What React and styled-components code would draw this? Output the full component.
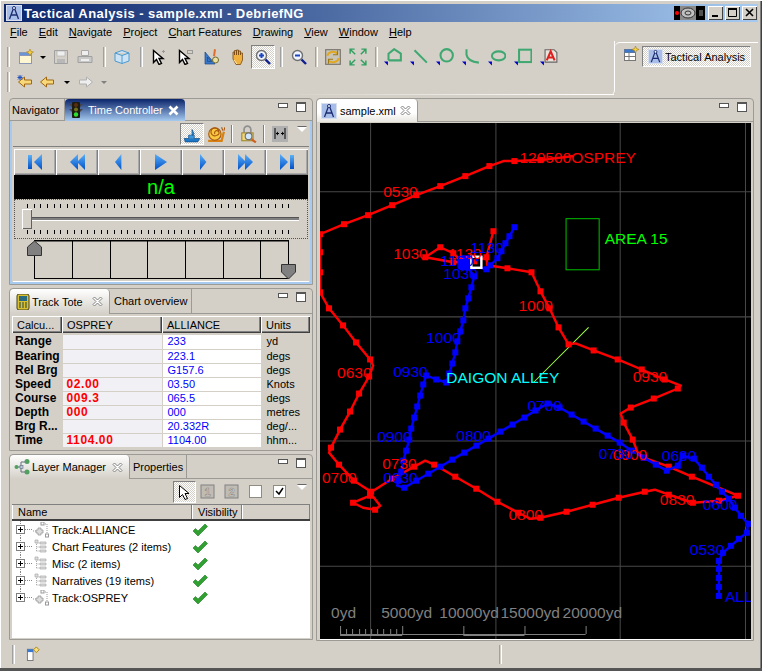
import styled, { createGlobalStyle, css } from 'styled-components'

const GlobalStyle = createGlobalStyle`
  html, body { margin: 0; padding: 0; background: #d4d0c8; }
  body { font-family: "Liberation Sans", Arial, sans-serif; font-size: 11px; color: #000; }
  svg { flex: none; }
`

const checker = css`
  background: repeating-conic-gradient(#ffffff 0 25%, #d4d0c8 0 50%) 0 0 / 2px 2px;
`

const Window = styled.div`
  width: 762px;
  height: 671px;
  box-sizing: border-box;
  padding: 4px 4px 0;
  display: flex;
  flex-direction: column;
  background: #d4d0c8;
  box-shadow: inset 1px 1px 0 #ffffff, inset -1px -1px 0 #404040, inset -2px -2px 0 #808080;
  overflow: hidden;
`
const TitleBar = styled.div`
  height: 18px;
  flex: none;
  display: flex;
  align-items: center;
  gap: 2px;
  padding-left: 2px;
  color: #fff;
  font-weight: bold;
  font-size: 13px;
  letter-spacing: 0.42px;
  background: linear-gradient(to right, #0a246a, #a6caf0);
`
const TitleSpacer = styled.div`
  flex: 1;
`
const TrayIcon = styled.svg`
  margin-right: 1px;
`
const CaptionButton = styled.div`
  width: 15px;
  height: 14px;
  margin-right: ${p => (p.$last ? '1px' : '0')};
  background: #d4d0c8;
  box-shadow: inset 1px 1px 0 #fff, inset -1px -1px 0 #404040;
  display: flex;
  align-items: center;
  justify-content: center;
`
const MenuBar = styled.div`
  height: 19px;
  flex: none;
  display: flex;
  align-items: center;
  padding-left: 1px;
  gap: 1px;
`
const MenuItem = styled.span`
  padding: 0 5px;
  white-space: nowrap;
  u { text-decoration: underline; }
`
const ToolArea = styled.div`
  height: 54px;
  flex: none;
  display: flex;
`
const Toolbars = styled.div`
  flex: 1;
  display: flex;
  flex-direction: column;
  padding-top: 3px;
  border-bottom-right-radius: 5px;
  border-right: 1px solid #fff;
  position: relative;
  &::after {
    content: '';
    position: absolute;
    left: 0;
    right: 0;
    bottom: 0;
    height: 1px;
    background: linear-gradient(to right, #d4d0c8 45%, #ffffff 100%);
  }
`
const ToolRow = styled.div`
  height: ${p => p.$h}px;
  display: flex;
  align-items: center;
  padding-left: 3px;
`
const Grip = styled.div`
  width: 1px;
  height: ${p => p.$h || 20}px;
  flex: none;
  margin: 0 ${p => p.$r ?? 4}px 0 ${p => p.$l ?? 0}px;
  background: #d4d0c8;
  border-left: 1px solid #a0a0a0;
  border-right: 1px solid #fff;
`
const ToolButton = styled.div`
  width: ${p => p.$w || 26}px;
  height: 24px;
  flex: none;
  display: flex;
  align-items: center;
  justify-content: center;
  box-sizing: border-box;
  ${p => p.$on && css`
    ${checker}
    border: 1px solid;
    border-color: #808080 #fff #fff #808080;
  `}
`
const Caret = styled.span`
  width: 0;
  height: 0;
  flex: none;
  margin: ${p => p.$m};
  border-left: 3px solid transparent;
  border-right: 3px solid transparent;
  border-top: 3px solid ${p => p.$dim ? '#808080' : '#000'};
`
const PerspectiveBar = styled.div`
  width: 143px;
  flex: none;
  box-sizing: border-box;
  border-top: 1px solid #fff;
  border-top-left-radius: 5px;
  margin-top: 1px;
  padding: 3px 0 0 8px;
  display: flex;
  align-items: flex-start;
  gap: 3px;
  height: 53px;
`
const PerspectiveButton = styled.div`
  width: 109px;
  height: 21px;
  box-sizing: border-box;
  border: 1px solid;
  border-color: #808080 #fff #fff #808080;
  ${checker}
  display: flex;
  align-items: center;
  gap: 2px;
  padding-left: 5px;
  white-space: nowrap;
`
const Main = styled.div`
  flex: 1;
  min-height: 0;
  display: flex;
  gap: 3px;
  padding: 3px 0 0 5px;
`
const LeftColumn = styled.div`
  width: 304px;
  flex: none;
  display: flex;
  flex-direction: column;
  gap: 3px;
`
const Panel = styled.div`
  height: ${p => p.$h ? p.$h + 'px' : 'auto'};
  flex: ${p => p.$h ? 'none' : 1};
  box-sizing: border-box;
  border: 1px solid #9c9a94;
  border-radius: 4px 4px 0 0;
  display: flex;
  flex-direction: column;
  overflow: hidden;
`
const TabBar = styled.div`
  height: ${p => p.$h || 22}px;
  flex: none;
  display: flex;
  align-items: stretch;
  border-bottom: 1px solid #9c9a94;
`
const Tab = styled.div`
  display: flex;
  align-items: center;
  gap: ${p => p.$gap ?? 5}px;
  box-sizing: border-box;
  width: ${p => p.$w}px;
  padding: 0 6px 0 ${p => p.$pl || 4}px;
  white-space: nowrap;
  border-right: 1px solid #9c9a94;
  ${p => p.$selected && css`
    background: linear-gradient(to bottom, #ffffff, #d4d0c8);
    border-radius: 4px 4px 0 0;
    margin-bottom: -1px;
  `}
  ${p => p.$active && css`
    background: linear-gradient(to bottom, #0a246a, #a6caf0);
    color: #fff;
    border-radius: 4px 4px 0 0;
    border-right: none;
    margin-bottom: -1px;
  `}
  ${p => p.$sheet && css`
    background: linear-gradient(to bottom, #ffffff 60%, #e8e6e0);
    border-radius: 4px 4px 0 0;
    margin-bottom: -1px;
  `}
`
const TabClose = styled.svg`
  margin-left: auto;
  flex: none;
`
const TabActions = styled.div`
  margin-left: auto;
  display: flex;
  align-items: flex-start;
  gap: 8px;
  padding: 3px 6px 0 0;
`
const MinBox = styled.span`
  width: 8px;
  height: 3px;
  margin-top: 1px;
  border: 1px solid #555;
  background: #fff;
`
const MaxBox = styled.span`
  width: 8px;
  height: 7px;
  border: 1px solid #555;
  border-top-width: 2px;
  background: #fff;
`
const ActiveFrame = styled.div`
  flex: 1;
  min-height: 0;
  border: 2px solid #a6caf0;
  border-top: none;
  display: flex;
  flex-direction: column;
`
const ViewToolbar = styled.div`
  height: ${p => p.$h || 25}px;
  flex: none;
  display: flex;
  align-items: center;
  justify-content: flex-end;
  padding-right: 3px;
`
const ViewButton = styled.div`
  width: ${p => p.$w || 24}px;
  height: ${p => p.$tall || 22}px;
  flex: none;
  box-sizing: border-box;
  display: flex;
  align-items: center;
  justify-content: center;
  ${p => p.$on && css`
    ${checker}
    border: 1px solid;
    border-color: #808080 #fff #fff #808080;
  `}
`
const ViewMenu = styled.span`
  width: 0;
  height: 0;
  margin: -8px ${p => p.$r}px 0 ${p => p.$l}px;
  border-left: 5px solid transparent;
  border-right: 5px solid transparent;
  border-top: 5px solid #fff;
  filter: drop-shadow(0 -1px 0 #666);
`
const ViewSep = styled.span`
  width: 1px;
  height: 18px;
  margin: 0 ${p => p.$r}px 0 ${p => p.$l}px;
  background: #808080;
  border-right: 1px solid #fff;
`
const TimeBody = styled.div`
  flex: 1;
  min-height: 0;
  margin: 0 1px;
  display: flex;
  flex-direction: column;
  border-top: 1px solid #808080;
  border-bottom: 1px solid #fff;
  padding: 2px 0 0 1px;
`
const TransportRow = styled.div`
  height: 26px;
  flex: none;
  display: grid;
  grid-template-columns: repeat(7, 42px);
`
const TransportButton = styled.div`
  display: flex;
  align-items: center;
  justify-content: center;
  background: #d4d0c8;
  box-shadow: inset 1px 1px 0 #fff, inset -1px -1px 0 #808080, inset -2px -2px 0 #a8a8a8;
`
const TimeDisplay = styled.div`
  height: 24px;
  flex: none;
  margin-right: 1px;
  background: #000;
  color: #00ff00;
  font-size: 20px;
  line-height: 24px;
  text-align: center;
`
const SliderBox = styled.div`
  height: 40px;
  flex: none;
  margin-right: 1px;
  box-sizing: border-box;
  border: 1px dotted #555;
  position: relative;
`
const Ticks = styled.div`
  height: 4px;
  margin: ${p => p.$m};
  width: 268px;
  background: repeating-linear-gradient(to right, #000 0 1px, transparent 1px 6.7px);
`
const SliderTrack = styled.div`
  height: 2px;
  margin: 9px 8px 9px 17px;
  background: #808080;
  border-top: 1px solid #555;
  border-bottom: 1px solid #fff;
`
const SliderThumb = styled.div`
  position: absolute;
  left: 7px;
  top: 9px;
  width: 10px;
  height: 20px;
  background: #d4d0c8;
  box-shadow: inset 1px 1px 0 #fff, inset -1px -1px 0 #606060;
`
const RangeChart = styled.svg`
  display: block;
  flex: none;
  margin-top: 1px;
`
const ToteTable = styled.table`
  margin: 2px 0 0 2px;
  width: 298px;
  border-collapse: collapse;
  table-layout: fixed;
`
const ToteHead = styled.th`
  height: 17px;
  padding: 0 0 0 5px;
  box-sizing: border-box;
  text-align: left;
  font-weight: normal;
  overflow: hidden;
  white-space: nowrap;
  box-shadow: inset 1px 1px 0 #fff, inset -1px -1px 0 #404040, inset -2px -2px 0 #808080;
`
const ToteCell = styled.td`
  height: 14px;
  padding: 0 0 0 ${p => p.$pl ?? 5}px;
  box-sizing: border-box;
  line-height: 13px;
  white-space: nowrap;
  overflow: hidden;
  border-bottom: 1px solid #d4d0c8;
  border-right: 1px solid #d4d0c8;
  background: ${p => p.$bg || 'transparent'};
  color: ${p => p.$color || '#000'};
  ${p => p.$bold && css`
    font-weight: bold;
    font-size: 12px;
    letter-spacing: ${p.$track || 0}px;
  `}
`
const SpacerRow = styled.tr`
  height: 2px;
`
const TreeHeader = styled.div`
  height: 14px;
  flex: none;
  margin: 0 2px;
  display: grid;
  grid-template-columns: 180px 50px 1fr;
  border-top: 1px solid #808080;
  border-bottom: 2px solid #404040;
`
const TreeHeadCell = styled.div`
  padding-left: 5px;
  line-height: 14px;
  border-left: 1px solid #fff;
  border-right: 1px solid #808080;
`
const TreeBody = styled.div`
  flex: 1;
  margin: 0 2px 1px;
  background: #fff;
`
const TreeRow = styled.div`
  height: 17px;
  display: grid;
  grid-template-columns: 21px 19px 140px 1fr;
  align-items: center;
`
const Stem = styled.div`
  height: 17px;
  box-sizing: border-box;
  display: flex;
  align-items: center;
  padding-left: 4px;
  background:
    repeating-linear-gradient(to right, #888 0 1px, transparent 1px 2px) 13px 8px / 8px 1px no-repeat,
    repeating-linear-gradient(to bottom, #888 0 1px, transparent 1px 2px) 8px 0 / 1px ${p => p.$end ? '9px' : '100%'} no-repeat;
`
const Expander = styled.div`
  width: 7px;
  height: 7px;
  border: 1px solid #808080;
  background: #fff linear-gradient(#000, #000) center / 5px 1px no-repeat;
  position: relative;
  &::after {
    content: '';
    position: absolute;
    left: 3px;
    top: 1px;
    width: 1px;
    height: 5px;
    background: #000;
  }
`
const TreeLabel = styled.span`
  white-space: nowrap;
`
const EditorPanel = styled(Panel)`
  flex: none;
  width: 438px;
  height: 100%;
`
const ChartBox = styled.div`
  flex: 1;
  min-height: 0;
  margin: 1px 2px 0 3px;
  border-bottom: 1px solid #fff;
  background: #000;
`
const ChartSvg = styled.svg`
  display: block;
  width: 100%;
  height: 100%;
  font-family: "Liberation Sans", Arial, sans-serif;
  font-size: 15.5px;
`
const StatusBar = styled.div`
  height: 30px;
  flex: none;
  margin: 0 -4px;
  box-sizing: border-box;
  padding: 4px 0 0 12px;
  display: flex;
  align-items: flex-start;
  border-bottom: 3px solid #555;
`
const StatusIcon = styled.svg`
  margin-left: 11px;
  margin-top: 1px;
`
const StatusSep = styled(Grip)`
  margin-left: 458px;
`

// ----- icons -----
const Svg = ({ children, s = 16, ...rest }) => (
  <svg width={s} height={s} viewBox="0 0 16 16" {...rest}>{children}</svg>
)
const AppIcon = ({ s = 16 }) => (
  <Svg s={s}>
    <rect x=".5" y=".5" width="15" height="15" fill="#a8bde8" stroke="#d8e0f0" />
    <path d="M8 2 3.5 14M8 2l4.5 12M5 10h6" stroke="#1c2c70" strokeWidth="1.3" fill="none" />
    <circle cx="8" cy="3" r="1.5" fill="#fff" stroke="#1c2c70" />
  </Svg>
)
const CloseX = ({ color = '#808080', white }) => (
  <TabClose width="11" height="11" viewBox="0 0 11 11">
    {white
      ? <path d="M1.5 1.5l8 8M9.5 1.5l-8 8" stroke="#fff" strokeWidth="2.6" />
      : <path d="M1 2.5 2.5 1 5.5 4 8.5 1 10 2.5 7 5.5l3 3L8.500 10 5.500 7l-3 3L1 8.500l3-3z" fill="#fff" stroke={color} />}
  </TabClose>
)
const NewIcon = () => (
  <Svg>
    <rect x="1.500" y="3.500" width="12" height="11" fill="#fdf6d0" stroke="#8a97b8" />
    <rect x="1.500" y="3.500" width="12" height="3" fill="#6a94d8" stroke="#8a97b8" />
    <path d="M12 0l1 2.500L15.500 3 13 4.500 12 7l-1-2.500L8.500 3 11 2.500z" fill="#f8d040" stroke="#a88010" strokeWidth=".6" />
  </Svg>
)
const SaveIcon = () => (
  <Svg>
    <path d="M1.500 1.500h13v13h-13z" fill="#d4d0c8" stroke="#a0a0a0" />
    <rect x="4" y="2" width="8" height="5" fill="#eee" stroke="#a8a8a8" strokeWidth=".6" />
    <rect x="4" y="10" width="8" height="4" fill="#b8b8b8" />
  </Svg>
)
const PrintIcon = () => (
  <Svg>
    <path d="M4.500 1.500h7v5h-7z" fill="#eee" stroke="#a8a8a8" />
    <path d="M1 7.500h14v6H1z" fill="#c8c8c8" stroke="#a0a0a0" />
    <path d="M4 11h8" stroke="#eee" strokeWidth="2" />
  </Svg>
)
const CubeIcon = () => (
  <Svg>
    <path d="M1 4 8 1.500 15 4v8l-7 2.500L1 12zM1 4l7 2.500L15 4M8 6.500v8" fill="#cde3f4" stroke="#4a9ad0" />
  </Svg>
)
const cursorPath = 'M2.500 1.500v12l3-3 2.500 5 2.500-1-2.500-5h4z'
const CursorDot = () => (
  <Svg>
    <path d={cursorPath} fill="#fff" stroke="#000" strokeWidth="1.400" />
    <path d="M14 2.500h-3M12.500 1v3" stroke="#999" />
  </Svg>
)
const CursorRect = () => (
  <Svg>
    <path d={cursorPath} fill="#fff" stroke="#000" strokeWidth="1.400" />
    <rect x="10.500" y="1.500" width="5" height="3" fill="#d4d0c8" stroke="#999" />
  </Svg>
)
const ToolsIcon = () => (
  <Svg>
    <path d="M1 15V3l10 12zM3.500 12.500V8l4 4.500z" fill="#3a78c8" stroke="#1a4888" strokeWidth=".7" />
    <path d="M10 0l2 .500-1 7-2-.500z" fill="#e07030" />
    <circle cx="11.500" cy="11" r="3" fill="#e8e0a0" stroke="#706830" />
  </Svg>
)
const HandIcon = () => (
  <Svg>
    <path d="M3 7V3h1.500v3-4.500h2V6 1h2v5-4h2v4-2h2v7l-2 4.500H6L3 10z" fill="#f0b040" stroke="#7a4810" strokeWidth=".8" />
    <path d="M4 11l3 4" stroke="#fff0a0" />
  </Svg>
)
const Magnifier = ({ plus }) => (
  <Svg>
    <circle cx="6.500" cy="6.500" r="5" fill="#f0f4ff" stroke="#707070" strokeWidth="1.400" />
    <path d="M4 6.500h5" stroke="#1a44c0" strokeWidth="2" />
    {plus && <path d="M6.500 4v5" stroke="#1a44c0" strokeWidth="2" />}
    <path d="M10.500 10.500 15 15" stroke="#102090" strokeWidth="2.400" />
  </Svg>
)
const RefreshIcon = () => (
  <Svg s={18}>
    <rect x="1.500" y="1.500" width="13" height="13" fill="#c8c4b8" stroke="#77736a" />
    <path d="M3 7a5 4 0 0 1 9-2M13 9a5 4 0 0 1-9 2" fill="none" stroke="#e0a820" strokeWidth="1.800" />
    <path d="M12 2v4H8M4 14v-4h4" fill="none" stroke="#a07810" />
  </Svg>
)
const FitIcon = () => (
  <Svg s={18}>
    <path d="M1 5V1h4M11 1h4v4M15 11v4h-4M5 15H1v-4M1.500 1.500l4 4M14.500 1.500l-4 4M14.500 14.500l-4-4M1.500 14.500l4-4" fill="none" stroke="#30a060" strokeWidth="1.300" />
  </Svg>
)
const ShapeIcon = ({ children }) => (
  <Svg s={18}>
    <path d="M0 12h3.500l0 3.500z" fill="#0000c0" />
    <g fill="none" stroke="#3fa870" strokeWidth="1.800">{children}</g>
  </Svg>
)
const TextAIcon = () => (
  <Svg s={18}>
    <path d="M0 12h3.500l0 3.500z" fill="#0000c0" />
    <path d="M4.500 1.500h8l2.500 2.500v8.500H4.500z" fill="#e8e4dc" stroke="#666" />
    <path d="M6 11 9.500 3 13 11M7.500 8.500h4" fill="none" stroke="#e02020" strokeWidth="1.800" />
  </Svg>
)
const ArrowIcon = ({ dir = 'left', fill = '#f8d878', stroke = '#a06810', star }) => (
  <Svg>
    <g transform={dir === 'right' ? 'matrix(-1 0 0 1 16 0)' : undefined}>
      <path d="M1.500 8 7.500 3v3h7v4h-7v3z" fill={fill} stroke={stroke} />
    </g>
    {star && <path d="M3 1v5M.500 3.500h5M1 1.500l4 4M5 1.500l-4 4" stroke="#2050c0" />}
  </Svg>
)
const PerspectiveAdd = () => (
  <Svg>
    <rect x="1.500" y="3.500" width="11" height="11" fill="#fff" stroke="#777" />
    <path d="M1.500 6.500h11M6 6.500v8M1.500 10.500h11" stroke="#777" fill="none" />
    <path d="M1.500 3.500h11v3h-11z" fill="#3a78d0" />
    <path d="M12.500 0l1 2.500 2.500 1-2.500 1-1 2.500-1-2.500-2.500-1 2.500-1z" fill="#f8d040" stroke="#a88010" strokeWidth=".6" />
  </Svg>
)
const TrafficLight = () => (
  <Svg>
    <rect x="4" y="0" width="8" height="16" rx="1" fill="#1c1c10" />
    <path d="M1 2h3v3zM15 2h-3v3zM1 7h3v3zM15 7h-3v3z" fill="#444" />
    <circle cx="8" cy="3" r="2" fill="#5a2c10" />
    <circle cx="8" cy="7.500" r="2" fill="#70701c" />
    <circle cx="8" cy="12.500" r="2.200" fill="#30e030" />
  </Svg>
)
const BoatIcon = () => (
  <Svg s={18}>
    <path d="M1 12h14l-2 3H2z" fill="#1e78c8" stroke="#104880" strokeWidth=".6" />
    <path d="M5 12V9h5v3M8 9V4l2 4z" fill="#3a98e0" stroke="#104880" strokeWidth=".6" />
  </Svg>
)
const SnailIcon = () => (
  <Svg s={18}>
    <path d="M1 14h12l2-8" fill="none" stroke="#d88010" strokeWidth="2" />
    <circle cx="7" cy="8" r="5.500" fill="#f8c840" stroke="#a85810" />
    <path d="M7 8a2 2 0 1 1 2 1 3.500 3.500 0 1 1 1.500-3" fill="none" stroke="#a85810" />
    <path d="M14 5l-1-3M15 5l1-3" stroke="#a85810" />
  </Svg>
)
const LockZoomIcon = () => (
  <Svg s={18}>
    <path d="M4.500 7V4a3 3 0 0 1 6 0v3" fill="none" stroke="#909090" strokeWidth="1.500" />
    <rect x="2.500" y="7" width="10" height="7" fill="#f0d878" stroke="#a08830" />
    <circle cx="8.500" cy="10" r="3" fill="#cfe6ff" stroke="#707070" />
    <path d="M11 12.500 15 15.500" stroke="#d06020" strokeWidth="2" />
  </Svg>
)
const SpreadIcon = () => (
  <Svg>
    <rect width="16" height="16" fill="#b0b0b0" />
    <path d="M3 2v11M13 2v11M4 7.500h3M12 7.500H9" stroke="#000" />
    <path d="M4 7.500 6 5.500v4zM12 7.500l-2-2v4z" fill="#000" />
  </Svg>
)
const Transport = ({ kind }) => {
  const left = 'M8 0v16L0 8z'
  const right = 'M0 0v16L8 8z'
  return (
    <svg width="16" height="16" viewBox="0 0 16 16">
      <defs>
        <linearGradient id="tb" x1="0" y1="0" x2="0" y2="1">
          <stop offset="0" stopColor="#5ab0f8" />
          <stop offset="1" stopColor="#0050c8" />
        </linearGradient>
      </defs>
      <g fill="url(#tb)">
        {kind === 'first' && <><rect x="1" y="1" width="4" height="14" /><path d={left} transform="translate(7 0)" /></>}
        {kind === 'rew' && <><path d={left} transform="translate(1 0)" /><path d={left} transform="translate(8 0)" /></>}
        {kind === 'back' && <path d={left} transform="translate(4 0) scale(.8 1)" />}
        {kind === 'play' && <path d="M2 0v16L14 8z" />}
        {kind === 'fwd' && <path d={right} transform="translate(5 0) scale(.8 1)" />}
        {kind === 'ff' && <><path d={right} transform="translate(1 0)" /><path d={right} transform="translate(8 0)" /></>}
        {kind === 'last' && <><path d={right} transform="translate(1 0)" /><rect x="11" y="1" width="4" height="14" /></>}
      </g>
    </svg>
  )
}
const TreeGroupIcon = () => (
  <Svg>
    <path d="M3.500 1v11M3.500 4h4M3.500 8h4M3.500 12h4" stroke="#aaa" strokeDasharray="1 1" fill="none" />
    <path d="M2 1h3v3H2zM7 3h6v2H7zM7 7h6v2H7zM7 11h6v2H7z" fill="#ddd" stroke="#aaa" strokeWidth=".7" />
  </Svg>
)
const TreeTrackIcon = () => (
  <Svg>
    <path d="M0 9h4M10 2h4v12" stroke="#999" fill="none" strokeDasharray="1 1" />
    <path d="M3 8h2V6h3v2h2v3H8v2H5v-2H3z" fill="#ddd" stroke="#999" strokeWidth=".8" />
    <rect x="8" y="0" width="3" height="3" fill="#fff" stroke="#999" />
    <rect x="12.500" y="12" width="3" height="3" fill="#fff" stroke="#999" />
  </Svg>
)
const Check = () => (
  <Svg>
    <path d="M1 9l2.500-2.500L6 9l7-7 2.500 2.500L6 14z" fill="#30a030" stroke="#1a7a20" strokeWidth=".6" />
  </Svg>
)
const BoxNumber = ({ n }) => (
  <Svg>
    <rect x="1" y="1" width="13" height="13" fill="#c0bcb4" stroke="#808080" />
    <text x="7.500" y="12" textAnchor="middle" fontSize="11" fontWeight="bold" fontFamily="Liberation Sans" fill="#d8d4cc" stroke="#808080" strokeWidth=".5">{n}</text>
  </Svg>
)
const CheckBoxIcon = ({ checked }) => (
  <Svg>
    <rect x="1.500" y="1.500" width="12" height="12" fill="#fff" stroke="#908c80" />
    {checked && <path d="M4 7l3 3 4-6" fill="none" stroke="#000" strokeWidth="1.500" />}
  </Svg>
)
const LayersIcon = () => (
  <Svg>
    <circle cx="2.500" cy="8" r="2" fill="#50a060" />
    <circle cx="13" cy="2.500" r="2.500" fill="#50a060" />
    <circle cx="13" cy="13" r="2.500" fill="#50a060" />
    <path d="M4 8h3M7 3v10M7 3h4M7 13h4" stroke="#607080" fill="none" />
    <rect x="6" y="6.500" width="3" height="3" fill="#b8c8d8" stroke="#607080" strokeWidth=".6" />
  </Svg>
)
const ToteIcon = () => (
  <Svg>
    <rect x="2" y="0" width="12" height="16" rx="2" fill="#d8c030" stroke="#404020" />
    <rect x="4" y="2" width="8" height="5" fill="#2a6a80" />
    <path d="M4 9h2M7 9h2M10 9h2M4 11h2M7 11h2M10 11h2M4 13h2M7 13h2M10 13h2" stroke="#204040" />
  </Svg>
)
const FastViewIcon = () => (
  <StatusIcon width="15" height="15" viewBox="0 0 16 16">
    <rect x="1.500" y="3.500" width="6" height="12" fill="#fff" stroke="#777" />
    <rect x="1.500" y="3.500" width="6" height="3" fill="#3a78d0" />
    <path d="M11 1l3 3-3 3-3-3z" fill="#f8e080" stroke="#a88010" />
  </StatusIcon>
)

// ----- chart data, in window pixels -----
const redTrack = [
  [573, 156, 0], [540, 160], [514, 161], [503, 161, 0], [489, 166], [465, 176], [440, 186], [416, 195], [392, 205], [368, 215], [344, 224], [320, 234],
  [320, 252], [320, 272], [320, 292], [329, 308], [343, 325], [356, 342], [370, 359], [373, 365, 0], [369, 376], [359, 393], [350, 411], [340, 429], [331, 447],
  [329, 452, 0], [339, 464], [354, 480], [371, 491], [370, 495], [353, 502], [363, 507, 0], [375, 509], [380, 505, 0], [370, 492], [392, 478], [414, 466],
  [425, 460, 0], [434, 464], [455, 476], [476, 488], [497, 501], [518, 512], [530, 518, 0], [540, 517], [566, 511], [592, 504], [618, 497], [644, 491],
  [654, 489, 0], [668, 494], [692, 502], [718, 500], [737, 495], [691, 476], [668, 466], [643, 457], [637, 452, 0], [632, 439], [623, 422], [620, 413, 0],
  [630, 407], [653, 398], [677, 388], [680, 385, 0], [664, 379], [641, 369], [617, 359], [593, 350], [575, 343, 0], [568, 344], [558, 327], [549, 308],
  [540, 291], [531, 272], [507, 268], [487, 265, 0], [486, 257], [493, 231], [486, 257, 0], [473, 262], [453, 262], [425, 257], [440, 247], [453, 253], [462, 262, 0],
]
const blueTrack = [
  [514, 227], [509, 236], [505, 243], [501, 251], [497, 258], [490, 265], [486, 269], [474, 266, 0], [463, 262], [474, 276], [471, 287], [468, 298], [465, 308],
  [463, 320], [460, 331], [457, 341], [455, 352], [452, 363], [449, 373], [446, 382], [436, 379], [426, 375], [423, 384], [420, 395], [417, 406], [414, 417],
  [411, 428], [409, 439], [406, 450], [403, 460], [401, 471], [398, 480], [397, 485, 0], [404, 487], [416, 480], [428, 473], [440, 466], [452, 459], [464, 452],
  [476, 445], [488, 438], [500, 431], [512, 424], [524, 417], [535, 410], [547, 403], [559, 407], [571, 414], [583, 421], [595, 428], [607, 435], [619, 442],
  [631, 450], [643, 457], [655, 464], [666, 470], [677, 465], [682, 455], [693, 458], [701, 467], [708, 476], [715, 484], [721, 491], [728, 498], [734, 507],
  [740, 515], [747, 523], [746, 532], [738, 538], [730, 545], [722, 552], [718, 560], [718, 568], [718, 577], [718, 586], [718, 595],
]
const redLabels = [
  ['120500OSPREY', 519, 163], ['0530', 383, 197], ['1030', 393, 259], ['1130', 448, 259], ['1000', 518, 311], ['0630', 337, 378], ['0700', 322, 482],
  ['0730', 382, 468], ['0800', 508, 519], ['0930', 632, 381], ['0900', 612, 459], ['0830', 659, 504],
]
const blueLabels = [
  ['1130', 470, 253], ['1100', 440, 266], ['1030', 443, 279], ['1000', 426, 343], ['0930', 393, 377], ['0900', 377, 441], ['0800', 456, 440], ['0700', 527, 410],
  ['0630', 383, 482], ['0730', 598, 458], ['0630', 661, 460], ['0600', 702, 509], ['0530', 689, 554], ['ALL', 724, 601],
]
const scaleLabels = [['0yd', 331], ['5000yd', 381], ['10000yd', 439], ['15000yd', 500], ['20000yd', 562]]

const points = track => track.map(p => `${p[0]},${p[1]}`).join(' ')

const Track = ({ data, color }) => (
  <g>
    <polyline points={points(data)} fill="none" stroke={color} strokeWidth="2.400" strokeLinejoin="round" />
    {data.filter(p => p[2] !== 0).map((p, i) => (
      <rect key={i} x={p[0] - 3} y={p[1] - 3} width="6" height="6" fill={color} />
    ))}
  </g>
)

function Chart() {
  const minorTicks = Array.from({ length: 10 }, (_, i) => 340 + i * 6.2)
  return (
    <ChartSvg viewBox="320 123 430 515" preserveAspectRatio="none">
      <g stroke="#484848" strokeWidth="1">
        {[370.5, 495.5, 619.5, 744.5].map(x => <line key={x} x1={x} y1="123" x2={x} y2="638" />)}
        {[191.5, 316.5, 440.5, 565.5].map(y => <line key={y} x1="320" y1={y} x2="750" y2={y} />)}
      </g>
      <rect x="565.5" y="218.500" width="33" height="51" fill="none" stroke="#00c000" />
      <text x="604" y="244" fill="#00ff00">AREA 15</text>
      <line x1="533" y1="382" x2="588" y2="327" stroke="#a0ff40" />
      <Track data={redTrack} color="#ff0000" />
      <Track data={blueTrack} color="#0000ff" />
      <rect x="457" y="255" width="18" height="15" rx="4" fill="#0000ff" />
      <rect x="471" y="256.500" width="10" height="11" fill="#000" stroke="#fff" strokeWidth="2.400" />
      <rect x="473" y="259" width="4" height="5" fill="#ff0000" />
      <rect x="475" y="258" width="3" height="3" fill="#0000ff" />
      {redLabels.map(([t, x, y]) => <text key={t + x} x={x} y={y} fill="#ff0000">{t}</text>)}
      {blueLabels.map(([t, x, y]) => <text key={t + x} x={x} y={y} fill="#0000ff">{t}</text>)}
      <text x="446" y="382" fill="#00ffff">DAIGON ALLEY</text>
      {scaleLabels.map(([t, x]) => <text key={t} x={x} y="617" fill="#808080">{t}</text>)}
      <g stroke="#808080">
        <line x1="340" y1="633.500" x2="585" y2="633.500" />
        <line x1="340" y1="634" x2="402" y2="634" strokeWidth="2" />
        <line x1="463" y1="634" x2="524" y2="634" strokeWidth="2" />
        {[340.5, 402.5, 463.5, 524.5, 585.5].map(x => <line key={x} x1={x} y1="625" x2={x} y2="633" />)}
        {minorTicks.map(x => <line key={x} x1={Math.round(x) + 0.5} y1="628" x2={Math.round(x) + 0.5} y2="633" />)}
      </g>
    </ChartSvg>
  )
}

const ViewActions = () => (
  <TabActions>
    <MinBox />
    <MaxBox />
  </TabActions>
)

const toteRows = [
  ['Range', '', '233', 'yd'],
  ['Bearing', '', '223.1', 'degs'],
  ['Rel Brg', '', 'G157.6', 'degs'],
  ['Speed', '02.00', '03.50', 'Knots'],
  ['Course', '009.3', '065.5', 'degs'],
  ['Depth', '000', '000', 'metres'],
  ['Brg R...', '', '20.332R', 'deg/...'],
  ['Time', '1104.00', '1104.00', 'hhm...'],
]
const treeRows = [
  ['Track:ALLIANCE', 'track'],
  ['Chart Features (2 items)', 'group'],
  ['Misc (2 items)', 'group'],
  ['Narratives (19 items)', 'group'],
  ['Track:OSPREY', 'track'],
]
const menus = [['F', 'ile'], ['E', 'dit'], ['N', 'avigate'], ['P', 'roject'], ['C', 'hart Features'], ['D', 'rawing'], ['V', 'iew'], ['W', 'indow'], ['H', 'elp']]
const transport = ['first', 'rew', 'back', 'play', 'fwd', 'ff', 'last']

export default function App() {
  return (
    <>
      <GlobalStyle />
      <Window>
        <TitleBar>
          <AppIcon />
          <span>Tactical Analysis - sample.xml - DebriefNG</span>
          <TitleSpacer />
          <TrayIcon width="31" height="14" viewBox="0 0 31 14">
            <rect width="31" height="14" fill="#000" />
            <circle cx="3" cy="7" r="2" fill="#ff0000" />
            <rect x="6" y="0" width="16" height="14" fill="#8a8a8a" />
            <ellipse cx="14" cy="7" rx="7" ry="5" fill="#c0c0c0" stroke="#333" />
            <ellipse cx="14" cy="7" rx="3" ry="2" fill="none" stroke="#333" />
            <rect x="25" y="4" width="4" height="6" fill="#505050" />
          </TrayIcon>
          <CaptionButton><svg width="10" height="10"><rect x="1" y="7" width="6" height="2" /></svg></CaptionButton>
          <CaptionButton><svg width="10" height="10"><path d="M.5 1.500h8v7h-8z" fill="none" stroke="#000" /><path d="M0 1h9" stroke="#000" strokeWidth="2" /></svg></CaptionButton>
          <CaptionButton $last><svg width="10" height="10"><path d="M1 1l7 7M8 1 1 8" stroke="#000" strokeWidth="1.600" /></svg></CaptionButton>
        </TitleBar>

        <MenuBar>
          {menus.map(([m, rest]) => <MenuItem key={m}><u>{m}</u>{rest}</MenuItem>)}
        </MenuBar>

        <ToolArea>
          <Toolbars>
            <ToolRow $h={26}>
              <Grip $r={3} />
              <ToolButton><NewIcon /></ToolButton>
              <Caret $m="0 3px 0 1px" />
              <ToolButton $w={24}><SaveIcon /></ToolButton>
              <ToolButton $w={24}><PrintIcon /></ToolButton>
              <Grip $l={6} />
              <ToolButton $w={24}><CubeIcon /></ToolButton>
              <Grip $l={6} />
              <ToolButton $w={24}><CursorDot /></ToolButton>
              <ToolButton $w={28}><CursorRect /></ToolButton>
              <ToolButton><ToolsIcon /></ToolButton>
              <ToolButton><HandIcon /></ToolButton>
              <ToolButton $w={24} $on><Magnifier plus /></ToolButton>
              <Grip $l={5} />
              <ToolButton $w={24}><Magnifier /></ToolButton>
              <Grip $l={4} $r={3} />
              <ToolButton $w={24}><RefreshIcon /></ToolButton>
              <ToolButton><FitIcon /></ToolButton>
              <Grip $l={4} $r={2} />
              <ToolButton><ShapeIcon><path d="M4 10V5l5-4 6 4v6H5z" /></ShapeIcon></ToolButton>
              <ToolButton><ShapeIcon><path d="M4 2l11 11" /></ShapeIcon></ToolButton>
              <ToolButton><ShapeIcon><circle cx="9.500" cy="6.500" r="5.500" /></ShapeIcon></ToolButton>
              <ToolButton><ShapeIcon><path d="M4 1v5q1 6 11 7" /></ShapeIcon></ToolButton>
              <ToolButton><ShapeIcon><ellipse cx="9.500" cy="7" rx="6" ry="4" /></ShapeIcon></ToolButton>
              <ToolButton><ShapeIcon><rect x="4.500" y="1.500" width="11" height="11" /></ShapeIcon></ToolButton>
              <ToolButton><TextAIcon /></ToolButton>
            </ToolRow>
            <ToolRow $h={24}>
              <Grip $r={4} />
              <ToolButton $w={21}><ArrowIcon star /></ToolButton>
              <ToolButton $w={24}><ArrowIcon /></ToolButton>
              <Caret $m="0 4px 0 5px" />
              <ToolButton $w={24}><ArrowIcon dir="right" fill="#eeeeee" stroke="#b0b0b0" /></ToolButton>
              <Caret $dim $m="0 3px" />
            </ToolRow>
          </Toolbars>
          <PerspectiveBar>
            <PerspectiveAdd />
            <PerspectiveButton>
              <AppIcon s={15} />
              <span>Tactical Analysis</span>
            </PerspectiveButton>
          </PerspectiveBar>
        </ToolArea>

        <Main>
          <LeftColumn>
            <Panel $h={187}>
              <TabBar $h={21}>
                <Tab $w={55} $pl={2}>Navigator</Tab>
                <Tab $w={120} $pl={3} $gap={4} $active>
                  <TrafficLight />
                  <span>Time Controller</span>
                  <CloseX white />
                </Tab>
                <ViewActions />
              </TabBar>
              <ActiveFrame>
                <ViewToolbar $h={25}>
                  <ViewButton $on $w={24}><BoatIcon /></ViewButton>
                  <ViewButton $w={24}><SnailIcon /></ViewButton>
                  <ViewSep $l={3} $r={5} />
                  <ViewButton $w={20}><LockZoomIcon /></ViewButton>
                  <ViewSep $l={5} $r={7} />
                  <ViewButton $w={16} $tall={16}><SpreadIcon /></ViewButton>
                  <ViewMenu $l={9} $r={0} />
                </ViewToolbar>
                <TimeBody>
                  <TransportRow>
                    {transport.map(k => <TransportButton key={k}><Transport kind={k} /></TransportButton>)}
                  </TransportRow>
                  <TimeDisplay>n/a</TimeDisplay>
                  <SliderBox>
                    <Ticks $m="4px 0 0 12px" />
                    <SliderTrack />
                    <Ticks $m="0 0 0 12px" />
                    <SliderThumb />
                  </SliderBox>
                  <RangeChart width="292" height="41" viewBox="1 0 292 41">
                    <g fill="none" stroke="#000" strokeWidth="1">
                      <rect x="21.500" y=".5" width="254" height="38" />
                      <line x1="21" y1=".5" x2="276" y2=".5" strokeWidth="2" />
                      {[59.5, 97.5, 134.5, 172.5, 210.5, 247.5].map(x => <line key={x} x1={x} y1="0" x2={x} y2="39" />)}
                    </g>
                    <path d="M14.500 15.500V7l7-6 7 6v8.500z" fill="#808080" stroke="#333" />
                    <path d="M268.500 24.500V32l7 7 7-7v-7.500z" fill="#808080" stroke="#333" />
                  </RangeChart>
                </TimeBody>
              </ActiveFrame>
            </Panel>

            <Panel $h={163}>
              <TabBar $h={24}>
                <Tab $w={100} $pl={5} $gap={1} $selected>
                  <ToteIcon />
                  <span>Track Tote</span>
                  <CloseX />
                </Tab>
                <Tab $w={82} $pl={4}>Chart overview</Tab>
                <ViewActions />
              </TabBar>
              <ToteTable>
                <colgroup>
                  <col width="50" />
                  <col width="100" />
                  <col width="99" />
                  <col width="49" />
                </colgroup>
                <thead>
                  <tr>
                    <ToteHead>Calcu...</ToteHead>
                    <ToteHead>OSPREY</ToteHead>
                    <ToteHead>ALLIANCE</ToteHead>
                    <ToteHead>Units</ToteHead>
                  </tr>
                  <SpacerRow />
                </thead>
                <tbody>
                  {toteRows.map(([label, a, b, unit]) => (
                    <tr key={label}>
                      <ToteCell $bold $pl={3}>{label}</ToteCell>
                      <ToteCell $bg="#f0f0f5" $color="#ff0000" $bold $track={0.6} $pl={4}>{a}</ToteCell>
                      <ToteCell $bg="#ffffff" $color="#0000ff">{b}</ToteCell>
                      <ToteCell>{unit}</ToteCell>
                    </tr>
                  ))}
                </tbody>
              </ToteTable>
            </Panel>

            <Panel $h={186}>
              <TabBar $h={23}>
                <Tab $w={120} $pl={4} $gap={2} $selected>
                  <LayersIcon />
                  <span>Layer Manager</span>
                  <CloseX />
                </Tab>
                <Tab $w={57} $pl={3}>Properties</Tab>
                <ViewActions />
              </TabBar>
              <ViewToolbar $h={25}>
                <ViewButton $on $w={23}><Svg><path d={cursorPath} fill="#fff" stroke="#000" /></Svg></ViewButton>
                <ViewButton><BoxNumber n="1" /></ViewButton>
                <ViewButton><BoxNumber n="2" /></ViewButton>
                <ViewButton><CheckBoxIcon /></ViewButton>
                <ViewButton><CheckBoxIcon checked /></ViewButton>
                <ViewMenu $l={5} $r={2} />
              </ViewToolbar>
              <TreeHeader>
                <TreeHeadCell>Name</TreeHeadCell>
                <TreeHeadCell>Visibility</TreeHeadCell>
                <TreeHeadCell />
              </TreeHeader>
              <TreeBody>
                {treeRows.map(([name, kind], i) => (
                  <TreeRow key={name}>
                    <Stem $end={i === treeRows.length - 1}><Expander /></Stem>
                    {kind === 'track' ? <TreeTrackIcon /> : <TreeGroupIcon />}
                    <TreeLabel>{name}</TreeLabel>
                    <Check />
                  </TreeRow>
                ))}
              </TreeBody>
            </Panel>
          </LeftColumn>

          <EditorPanel>
            <TabBar $h={22}>
              <Tab $w={101} $pl={4} $gap={3} $sheet>
                <AppIcon />
                <span>sample.xml</span>
                <CloseX />
              </Tab>
              <ViewActions />
            </TabBar>
            <ChartBox>
              <Chart />
            </ChartBox>
          </EditorPanel>
        </Main>

        <StatusBar>
          <Grip $h={19} $r={0} />
          <FastViewIcon />
          <StatusSep $h={19} />
        </StatusBar>
      </Window>
    </>
  )
}
